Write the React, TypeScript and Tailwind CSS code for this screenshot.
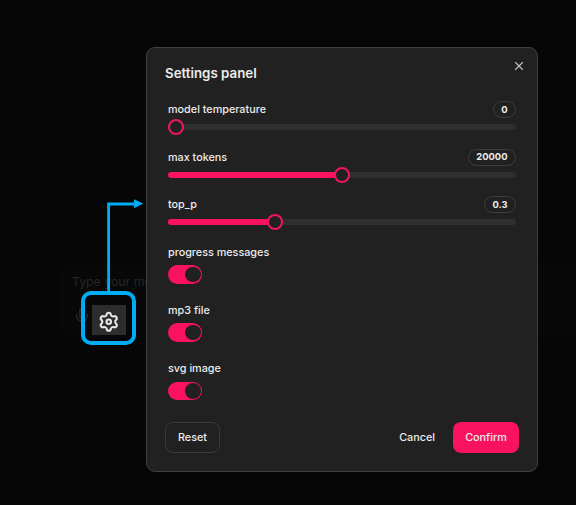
import React from "react";
import { Mic, X } from "lucide-react";

type SliderProps = { label: string; value: string; percent: number; thumb: number };

function GearIcon() {
  return (
    <svg
      className="size-[21.5px] shrink-0 text-[#e8e8e8]"
      viewBox="0 0 24 24"
      fill="none"
      stroke="currentColor"
      strokeWidth="2.3"
      strokeLinecap="round"
      strokeLinejoin="round"
    >
      <path d="M9.671 4.136a2.34 2.34 0 0 1 4.659 0 2.7 2.7 0 0 0 3.319 1.915 2.34 2.34 0 0 1 2.33 4.033 2.7 2.7 0 0 0 0 3.831 2.34 2.34 0 0 1-2.33 4.033 2.7 2.7 0 0 0-3.319 1.915 2.34 2.34 0 0 1-4.659 0 2.7 2.7 0 0 0-3.32-1.915 2.34 2.34 0 0 1-2.33-4.033 2.7 2.7 0 0 0 0-3.831A2.34 2.34 0 0 1 6.35 6.051a2.7 2.7 0 0 0 3.319-1.915" />
      <circle cx="12" cy="12" r="2.5" />
    </svg>
  );
}

function SliderRow({ label, value, percent, thumb }: SliderProps) {
  return (
    <div className="flex h-[47.5px] flex-col">
      <div className="flex h-[17px] items-center justify-between">
        <span className="text-[10.8px] font-medium leading-[17px]">{label}</span>
        <span className="flex h-[17px] items-center rounded-full border border-[#3d3d3d] px-[7.5px] text-[9.4px] font-bold leading-none">
          {value}
        </span>
      </div>
      <div className="relative mt-[6px] h-[6px] rounded-full bg-[#2f2f2f]">
        <div className="h-full rounded-full bg-[#f8125f]" style={{ width: `${percent}%` }} />
        <div
          className="absolute -top-[5px] size-4 rounded-full border-2 border-[#f01562] bg-[#212121]"
          style={{ left: thumb }}
        />
      </div>
    </div>
  );
}

function ToggleRow({ label }: { label: string }) {
  return (
    <div className="flex h-[58.3px] flex-col">
      <span className="text-[10.8px] font-medium leading-[17px]">{label}</span>
      <div className="mt-[4.5px] flex h-[18.7px] w-[34px] items-center justify-end rounded-full bg-[#f8125f] pr-[1.5px]">
        <div className="size-[15.5px] rounded-full bg-[#212121]" />
      </div>
    </div>
  );
}

export default function App() {
  return (
    <div className="relative h-[505px] w-[576px] overflow-hidden bg-[#060606] pl-[60px] pt-[262px] font-['Inter',sans-serif] text-[#ececec]">
      <div className="flex h-[76px] w-[560px] flex-col rounded-2xl bg-[#080808] pl-3 pt-[11px] text-[#262626]">
        <span className="text-[12.3px] leading-[18px]">Type your message here...</span>
        <Mic className="ml-[1px] mt-[16px] size-[18px]" strokeWidth={2} />
      </div>

      <div className="absolute left-[81px] top-[291px] flex h-[54px] w-[55px] justify-center rounded-[10px] border-4 border-[#00adf3] pt-[10px]">
        <div className="flex h-[30px] w-[34px] items-center justify-center bg-[#2d2d2d] pt-[3px]">
          <GearIcon />
        </div>
      </div>
      <svg className="absolute left-[100px] top-[195px]" width="46" height="100" viewBox="0 0 46 100">
        <path d="M8.6 98V9H35" fill="none" stroke="#00adf3" strokeWidth="2.8" />
        <path d="M34 4.3 43.3 8.5 34 13.3Z" fill="#00adf3" />
      </svg>

      <div className="absolute left-[146px] top-[47px] flex h-[425px] w-[392px] flex-col rounded-[9px] border border-[#404040] bg-[#212121] px-[18px]">
        <div className="flex h-[53px] justify-between">
          <h1 className="pt-[15px] text-[13.3px] font-semibold leading-5">Settings panel</h1>
          <X className="-mr-[7px] mt-[11px] size-3.5 text-[#bdbdbd]" strokeWidth={2} />
        </div>
        <div className="pl-[3px] pr-[3px]">
          <SliderRow label="model temperature" value="0" percent={0} thumb={0} />
          <SliderRow label="max tokens" value="20000" percent={50} thumb={166} />
          <SliderRow label="top_p" value="0.3" percent={30} thumb={99} />
          <ToggleRow label="progress messages" />
          <ToggleRow label="mp3 file" />
          <ToggleRow label="svg image" />
        </div>
        <div className="mt-[3.5px] flex h-[31px] items-center text-[10.8px] font-medium">
          <button className="h-[31px] w-[55px] rounded-[8px] border border-[#3a3a3a] pt-px">Reset</button>
          <button className="ml-auto mr-[18px] pt-px">Cancel</button>
          <button className="h-[31px] w-[66px] rounded-[8px] bg-[#f8125f] pt-px">Confirm</button>
        </div>
      </div>
    </div>
  );
}
